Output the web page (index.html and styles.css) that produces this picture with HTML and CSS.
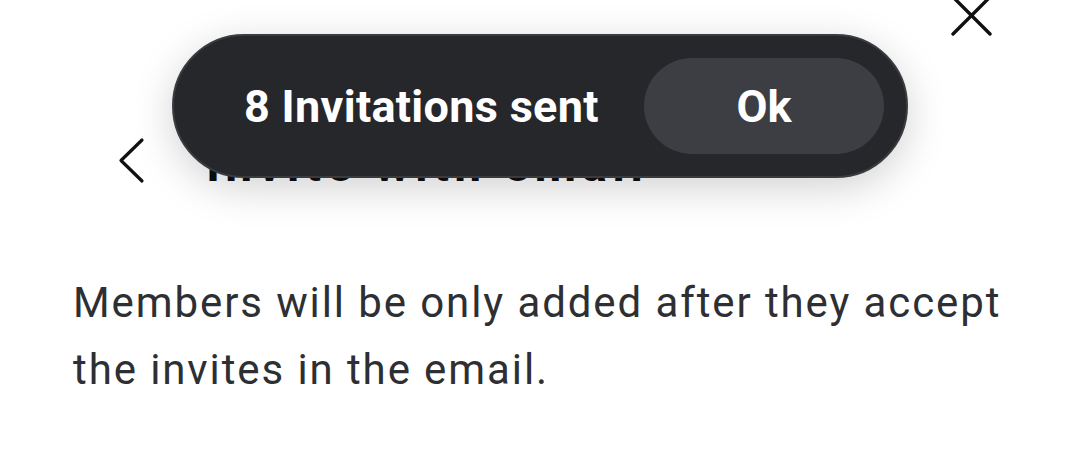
FILE: index.html
```html
<!DOCTYPE html>
<html lang="en">
<head>
  <meta charset="UTF-8">
  <meta name="viewport" content="width=device-width, initial-scale=1.0">
  <title>Invite with email</title>
  <link rel="stylesheet" href="styles.css">
</head>
<body>
  <div class="sheet">
    <div class="close-row">
      <button class="icon-btn close-btn" aria-label="Close">
        <svg width="44" height="40" viewBox="0 0 44 40">
          <path d="M4 -3 L41 34 M41 -3 L4 34" stroke="#111" stroke-width="3.4" stroke-linecap="round" fill="none"/>
        </svg>
      </button>
    </div>

    <div class="header">
      <button class="icon-btn back-btn" aria-label="Back">
        <svg width="30" height="48" viewBox="0 0 30 48">
          <path d="M24 3 L3 23.5 L24 44" stroke="#111" stroke-width="3.2" stroke-linecap="round" stroke-linejoin="round" fill="none"/>
        </svg>
      </button>
      <h2>Invite with email</h2>
    </div>

    <p class="note">Members will be only added after they accept the invites in the email.</p>
  </div>

  <div class="toast">
    <span class="toast-text">8 Invitations sent</span>
    <button class="toast-btn">Ok</button>
  </div>
</body>
</html>
```

FILE: styles.css
```css
body {
  margin: 0;
  background: #fff;
  font-family: Roboto, "Noto Sans", sans-serif;
  color: #111;
  height: 450px;
  overflow: hidden;
  position: relative;
}

.sheet {
  padding: 0 73px;
}

.icon-btn {
  background: none;
  border: none;
  padding: 0;
  cursor: pointer;
  display: block;
}

.icon-btn svg {
  display: block;
}

.close-row {
  display: flex;
  justify-content: flex-end;
  margin-right: 14px;
  height: 40px;
}

.header {
  display: flex;
  align-items: flex-start;
  gap: 58px;
  margin-top: 97px;
  padding-left: 45px;
}

.header h2 {
  margin: 0;
  font-size: 48px;
  line-height: 56px;
  font-weight: 700;
  letter-spacing: 5.2px;
  color: #0e0e10;
}

.note {
  margin: 76px 0 0;
  font-size: 42px;
  line-height: 67px;
  color: #2e2f33;
  letter-spacing: 1.9px;
}

.toast {
  position: absolute;
  top: 34px;
  left: 172px;
  width: 736px;
  height: 144px;
  box-sizing: border-box;
  border-radius: 72px;
  background: #26272b;
  border: 2px solid #3a3b3f;
  box-shadow: 0 10px 40px rgba(0, 0, 0, 0.18);
  display: flex;
  align-items: center;
  justify-content: space-between;
  padding: 0 22px 0 70px;
}

.toast-text {
  color: #fff;
  font-size: 45px;
  font-weight: 700;
  letter-spacing: 0.3px;
}

.toast-btn {
  width: 240px;
  height: 96px;
  border: none;
  border-radius: 48px;
  background: #3d3e43;
  color: #fff;
  font-family: inherit;
  font-size: 45px;
  font-weight: 700;
  cursor: pointer;
}
```
